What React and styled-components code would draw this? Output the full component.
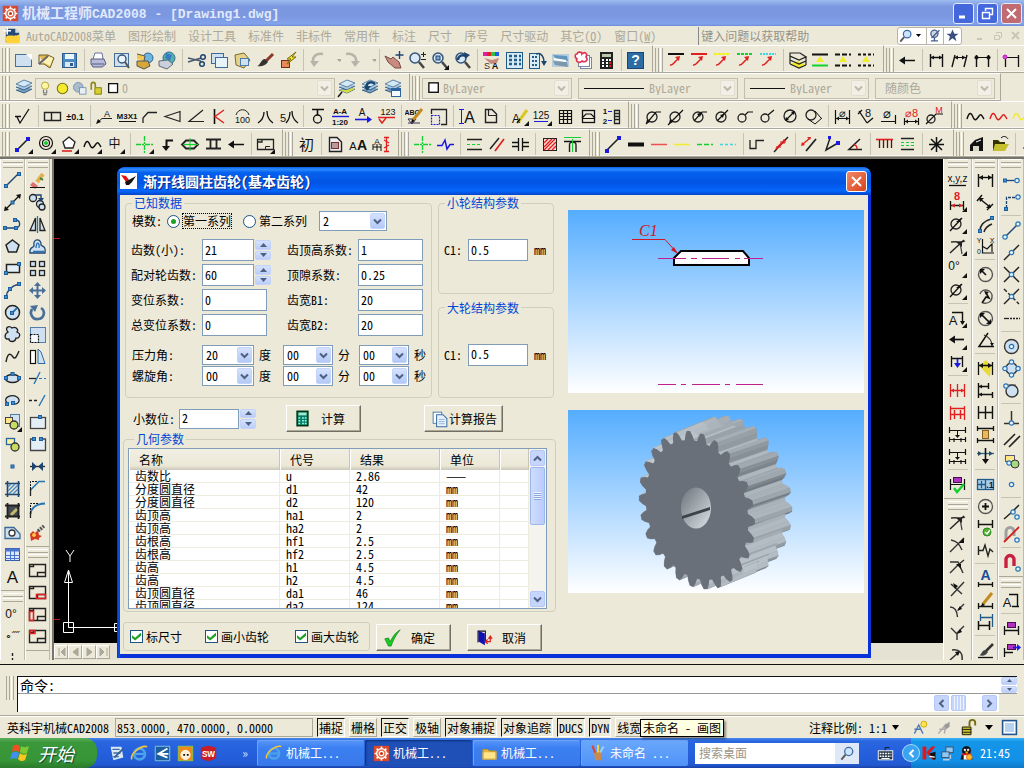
import React from 'react';
import styled, { createGlobalStyle, css } from 'styled-components';

const face = '#ece9d8';
const shade = '#aca899';
const fontStack = '"Noto Sans Mono CJK SC", "Noto Sans CJK SC", "Liberation Mono", monospace';

const GlobalStyle = createGlobalStyle`
  * { box-sizing: border-box; }
  body { margin: 0; background: ${face}; overflow: hidden; }
  body, button, input, select, table { font-family: ${fontStack}; font-size: 12px; line-height: 14px; color: #000; }
  button { cursor: default; }
`;

/* ---------- drawing primitives for the 21 x 21 icon grid ---------- */
const P = (d, s = '#111', w = 1, f = 'none', dash) => (
  <path d={d} stroke={s} strokeWidth={w} fill={f} strokeDasharray={dash} />
);
const F = (d, f = '#111') => <path d={d} fill={f} />;
const C = (x, y, r, s = '#111', f = 'none', w = 1) => (
  <circle cx={x} cy={y} r={r} stroke={s} strokeWidth={w} fill={f} />
);
const R = (x, y, w, h, s = '#111', f = 'none', sw = 1) => (
  <rect x={x} y={y} width={w} height={h} stroke={s} strokeWidth={sw} fill={f} />
);
const T = (x, y, t, c = '#111', z = 9, b = 400) => (
  <text x={x} y={y} fill={c} fontSize={z} fontWeight={b} textAnchor="middle" fontFamily='"Liberation Sans", "Noto Sans CJK SC", sans-serif'>{t}</text>
);
const N = (x, y) => R(x - 1.5, y - 1.5, 3, 3, '#1d5f9e', '#3b8fd0');
const O = (x, y) => C(x, y, 2.2, '#2775b5', '#e6f3ff', 1.2);
const corner = F('M20 15v5h-5z');
const red = '#e02020';
const blue = '#1a1ae0';
const navy = '#1e4470';
const ice = '#cfe0f1';
const green = '#12d030';
const cyan = '#3fd8e0';
const yellow = '#f0ec30';

const dimLine = (y = 10.5, c = '#111', v = '#111') => [
  P('M2.5 3V18M18.5 3V18', v), P(`M4 ${y}H17`, c),
  F(`M3 ${y}l4 -2.5v5zM18 ${y}l-4 -2.5v5z`, c),
];
const lineMark = (c, dash) => [P('M2 4H18', c, 2, 'none', dash), P('M4 15C7 16 8 12 12 9', red, 1.5), F('M14 6l-5 1l4 4z', red)];
const levels = (c, dash) => [P('M2 4.5H18', '#111', 2, 'none', dash), P('M2 15.5H18', c, 2, 'none', dash), F('M10 6l4 6h-8z', yellow)];
const viewBox = (extra) => [P('M2.5 4.5H18.5V16.5H2.5Z', '#222', 1.4), P('M2.5 6.5H6.5V4.5', '#222', 1.4), P('M10.5 16.5V12.5H18.5', '#222', 1.4), extra];
const stackPlates = [
  F('M3 12l8 3l8 -4l-8 -3z', '#7aa2c6'), P('M3 12l8 3l8 -4', '#315b80'),
  F('M3 9l8 3l8 -4l-8 -3z', '#a9c8e2'), P('M3 9l8 3l8 -4', '#315b80'),
  F('M3 6l8 3l8 -4l-8 -3z', '#d5e8f5'), P('M3 6l8 3l8 -4l-8 -3z', '#5b83a8'),
];
const diaBase = (x = 10, y = 11, r = 5) => C(x, y, r, '#222', 'none', 1.3);
const lens = [C(9, 8, 5, '#34557a', '#dbeaf6', 1.5), P('M13 12L18 18', '#444', 2.5)];
const breaker = (extra) => [P('M4 6C10 5 15 7 18 5', '#333', 1.4), P('M3 17L17 4', '#222', 1.4), P('M12 6C14 9 14 13 15 18', '#444', 1.3), F('M9 6h6v5z', '#222'), extra];
const wave = (c) => P('M2 13C4 6 6 6 8 11S12 13 14 10S17 10 19 13', c, 1.4);
const purpleTag = R(6.5, 4.5, 8, 5, '#401050', '#b030c0');
const pencil = [P('M8 14L17 3', '#c58a1e', 3), F('M6 17l1 -4l3 2z')];

const ICONS = {
  new: [R(2.5, 4.5, 16, 12, '#48718f', ice), F('M13 4h6v6z', '#fff')],
  open: [F('M3 5h9l6 3l-4 10l-6 -4z', '#e4b947'), P('M3 5h9l6 3l-4 10l-6 -4L3 14Z', '#6e5d2f'), F('M5 11l7 -5l5 2l-3 8z', '#fff3b5'), P('M3 14l9 -8', '#666', 2)],
  save: [R(3.5, 3.5, 14, 14, '#2b5c8c', '#4c8abf'), F('M6 4h9v5H6z', '#eef5fa'), F('M6 12h9v5H6z', '#dce8f1'), F('M11 13h3v3h-3z', '#2b5c8c')],
  print: [F('M7 3h7l1 6H5z', '#fff'), P('M5 9L7 3h7l1 6', '#68759a'), F('M3 9h13l2 5l-4 3H5l-2 -3z', '#b8bcd8'), P('M3 9h13l2 5l-4 3H5l-2 -3zM4 14h12', '#535d84')],
  preview: [R(3.5, 3.5, 14, 13, '#4a7193', ice), C(11, 9, 4, '#34557a', '#edf6fb', 1.4), P('M14 12l4 6', '#555', 2)],
  plot: [C(14, 8, 5, '#2e689e', '#6cb7dd'), F('M3 4l8 2l-1 5l-7 -2z', '#f0c850'), F('M3 11h11l2 5l-6 3l-7 -3z', '#d7a73a'), P('M3 11h11l2 5l-6 3l-7 -3zM3 4l8 2l-1 5', '#555')],
  publish: [C(12, 8, 6, '#3b6b96', '#4fb6a2'), F('M9 3l6 2l-2 6l-5 -3z', '#3b78c8'), F('M2 11l9 -1l5 4l-6 5l-8 -3z', '#c9d0dc'), P('M2 11l9 -1l5 4l-6 5l-8 -3z', '#5c6b80')],
  cut: [P('M2 8l13 3M2 12l13 -4', '#4b5a70', 1.5), C(17, 7, 2.3, navy, 'none', 1.5), C(16, 14, 2.3, navy, 'none', 1.5)],
  copy: [R(2.5, 3.5, 12, 10, '#3b6b9a', ice), R(6.5, 7.5, 12, 10, '#3b6b9a', '#e8f2fa')],
  paste: [F('M3 5l9 -2l6 7l-6 8l-8 -3z', '#e3d28a'), P('M3 5l9 -2l6 7l-6 8l-8 -3z', '#7a6a30'), R(8.5, 8.5, 8, 7, '#4b7ba6', ice)],
  match: [P('M11 11L18 4', '#8b3a2a', 3), F('M2 16C5 16 6 9 10 9l3 3C10 16 6 17 2 16z', '#333')],
  bolt: [R(3.5, 10.5, 8, 7, '#703018', '#e68a58'), F('M18 2l-9 7h4l-4 5l9 -7h-4z', yellow), P('M18 2l-9 7h4l-4 5l9 -7h-4z', '#7a6a00')],
  undo: [P('M16 4C8 3 4 8 7 14', '#b7b4aa', 2.5), F('M3 11l9 0l-5 6z', '#b7b4aa')],
  redo: [P('M4 4C12 3 16 8 13 14', '#b7b4aa', 2.5), F('M9 11l9 0l-5 6z', '#b7b4aa')],
  drop: [F('M8 9h5l-2.500 3z', '#aaa697')],
  pan: [F('M2 6l6 3l2 -2l6 5l2 6l-6 0l-7 -6z', '#c98a80'), P('M2 6l6 3l2 -2l6 5l2 6h-6l-7 -6z', '#794a44'), P('M16.500 1v8M12.500 5H20.500', navy, 1.4)],
  zoomRt: [lens, P('M15 4.500h5M17.500 2v5M15 9.500h5', '#222')],
  zoomWin: [lens, R(7, 6, 4, 4, navy, '#7ca9d0'), corner],
  zoomPrev: [lens, P('M6 10C6 6 10 4 14 6', navy, 2.5), F('M12 2l6 3l-5 4z', navy)],
  props: [F('M2 2h4v4H2z', '#e020a0'), F('M6 2h4v4H6z', red), F('M10 2h4v4h-4z', '#30c040'), F('M14 2h4v4h-4z', '#2060e0'), F('M3 8l8 2l7 -2l-2 5l-6 1z', '#c8897a'), T(6, 19, 'S', '#333', 9), T(14, 19, 'A', '#111', 9, 700)],
  design: [R(2.5, 2.5, 16, 16, '#1f5b88', '#d9ebf5'), P('M5 6h3M10 6h3M15 6h2M5 10h3M10 10h3M15 10h2M5 14h3M10 14h3M15 14h2', '#225e8c', 2.5)],
  tools: [R(2.5, 3.5, 10, 15, '#1f5b88', '#d9ebf5'), P('M5 7h2M8 7h2M5 11h2M8 11h2M5 15h2M8 15h2', '#225e8c', 2), P('M9 4C15 2 17 8 17 12', navy, 1.5), F('M14 11h6l-3 5z', navy)],
  sheet: [F('M2 4h17v13H2z', '#b9cedc'), F('M3 5l14 1l1 5L6 9z', '#6096bd'), F('M3 11l14 1l1 5L5 15z', '#7b98ac'), P('M4 9l12 2', '#fff', 2)],
  markup: [R(7.5, 7.5, 11, 11, '#78889c', '#fff'), R(5.5, 5.5, 11, 11, '#78889c', '#fff'), P('M4 4C5 1 9 2 9 4C12 1 15 4 13 7C16 10 12 13 9 11C6 14 2 11 4 9C1 7 2 4 4 4Z', '#e03050', 1.6, '#fff')],
  calc: [F('M4 2h13v17H4z', '#222'), F('M6 4h9v3H6z', '#bcc6aa'), P('M6 10h2M10 10h2M13 10h2M6 13h2M10 13h2M6 16h2M10 16h2', '#fff', 2), P('M13 13h2M13 16h2', red, 2)],
  help: [R(2.5, 2.5, 16, 16, '#184777', '#2b6ca5'), T(10.5, 15, '?', '#fff', 14, 700)],
  markBlack: lineMark('#111'), markRed: lineMark(red), markYellow: lineMark(yellow, '3 1'), markGreen: lineMark(green, '3 1'), markCyan: lineMark(cyan, '2 1'),
  pile: [F('M3 14l9 4l7 -3l-8 -4z', yellow), P('M3 14l9 4l7 -3M3 10l9 4l7 -3v4M3 6l9 4l7 -3v4M3 3h10l6 4l-7 3L3 6zM3 3v11', '#222', 1.2)],
  levelGreen: levels(green), levelDot: levels('#111', '5 2'), levelDash: levels('#111', '3 2'),
  arrowLeft: [P('M6 10.500H18', '#111', 1.5), F('M2 10.500l6 -4v8z')],
  dimA: [P('M4.500 4V17M16.500 4V17M5 7.500H16', '#111', 1.4), F('M5 7.500l3 -2v4zM16 7.500l-3 -2v4z')],
  dimB: [P('M3 17L6 5M15 17L18 5', '#111', 1.4), P('M6 7.500H17'), F('M5 7.500l4 -2v4zM17 7.500l-4 -2v4z')], dimC: [P('M4.500 5V17M16.500 5V17', '#111', 1.4), P('M3 7.500H18'), C(4.5, 7.5, 1.6, '#111', '#111'), C(16.5, 7.5, 1.6, '#111', '#111')],
  dimD: [P('M4.500 5V17M17.500 5V17', '#111', 1.3), P('M4 7.500H17'), C(4, 7, 2, '#c020c0', '#e040e0')],
  layers: stackPlates,
  layersA: [stackPlates, F('M3 12l8 3l8 -4l-3 -1l-5 2z', '#d8dc40'), P('M2 19l4 -5', '#111', 1.4)],
  layersB: [stackPlates, P('M8 11C6 4 12 3 16 6', navy, 2.5), F('M5 8h7l-4 5z', navy)],
  layersC: [stackPlates, R(9.5, 10.5, 9, 8, '#2b64a0', '#f4f9fd'), F('M9 10h10v3H9z', '#2b64a0')],
  surface: [P('M2 10.500h6M4 11l3 6L16 3', '#111', 1.3)],
  frame2: [P('M2.500 6.500H18.500V14.500H2.500ZM9.500 6.500V14.500', '#222', 1.4)],
  tol: [T(10, 14, '±0.1', '#111', 9, 700)],
  leadA: [P('M3 17L8 12.500H18', '#222'), F('M2 18l2 -5l3 3z'), T(13, 11, 'A', '#111', 9)],
  thread: [T(10, 13, 'M3X1', '#111', 8, 700), P('M2 15.500H19')],
  fillet: [P('M3 17V12L8 6.500H17', '#222', 1.3)], taper: [P('M2 10.500L17 5.500V15.500Z', '#222', 1.2)],
  slope: [P('M17 4L3 15.500H18', '#222', 1.2)], weldK: [P('M5.500 3V18', '#111', 1.6), P('M15 4L6 10.500L15 17', red, 1.4)],
  arc100: [P('M4 9C6 2 15 2 17 9', '#222'), T(10.5, 17, '100', '#111', 9)],
  ba: [P('M9 6C9 11 6 15 3 17M12 5C12 11 15 15 18 17', '#111', 1.3)], ba5: [T(5, 16, '5', '#111', 11), P('M12 6C12 11 10 15 8 17M14 5C14 11 17 15 20 17', '#111', 1.3)],
  datum: [P('M5 3.500H17M10.500 3V9', '#111', 1.6), C(10.5, 13, 4, '#111', 'none', 1.3)],
  section: [T(10, 8, 'A-A', '#111', 8, 700), P('M2 10.500H19', blue, 1.4), T(10, 19, '1:20', '#111', 8, 700)],
  viewArrow: [T(9, 10, 'A', '#111', 10), P('M2 13.500H16', blue, 1.6), F('M14 10l5 3.500l-5 3.500z', blue)],
  rough: [T(12, 9, '123', '#111', 9), P('M2 11.500H19M3 13l3 4l4 -5', red, 1.4)],
  sketch: [T(7, 9, 'ABC', '#111', 7, 700), P('M3 13h8l-4 5l-4 -5', '#335'), P('M3 17h12', '#335'), pencil],
  dotBox: [P('M3.500 8V3.500H18.500V18.500H13', '#222', 1.3), P('M3.500 9.500H11.500V18.500H3.500Z', blue, 1.2, 'none', '2 1')],
  textA: [P('M4.500 3V18M2 3.500h5M2 17.500h5', blue), T(12.5, 17, 'A', '#111', 16)],
  sheetTag: [P('M5.500 3.500H12L16.500 8V16.500H5.500Z', '#222', 1.4), P('M8.500 3.500V9.500H16', '#222', 1.2)],
  penA: [T(7, 17, 'A', '#111', 12), P('M10 15L18 4', '#d8c820', 3), P('M8 17l3 -4', '#111', 1.6), corner],
  num125: [T(9, 13, '125', '#111', 10), P('M2 15.500H16', blue), corner],
  grid: [P('M4.500 4.500H16.500V17.500H4.500ZM4 7.500H17M4 10.500H17M4 13.500H17M8.500 4V17M12.500 4V17', '#111', 1.2)],
  roof: [R(4.5, 4.5, 12, 12, '#111', 'none', 1.3), P('M4 12L8 8h5l4 4M4 12.500h13', '#111', 1.2)],
  order: [T(4, 8, '1', '#111', 8, 700), T(4, 18, '2', '#111', 8, 700), P('M7 5.500h4M7 14.500h4', blue), P('M13.500 4.500H18.500V17.500H13.500ZM13 7.500h6M13 10.500h6M13 13.500h6', '#222', 1.3)],
  dia1: [diaBase(), P('M4 18L14 6H19', '#111', 1.2), F('M4 18l1 -5l3 3z')], dia2: [diaBase(), P('M3 19L18 4', '#111', 1.3), F('M4 18l1 -5l3 3z')], dia3: [diaBase(), P('M6 15L14 6H19', '#111', 1.2), F('M14 6l-5 2l3 3z')], dia4: [diaBase(), P('M6 15L17 4', '#111', 1.2), F('M13 8l-4 1l3 3z')],
  dia5: [diaBase(8, 12, 4), P('M11 9L14 6H19', '#111', 1.2)], dia6: [diaBase(8, 12, 4), P('M11 9L17 4', '#111', 1.2)], dia7: [diaBase(10, 10, 6), P('M7 13L13 7', '#111', 1.3), F('M15 5l-4 1l3 3zM5 15l4 -1l-3 -3z')], dia8: [diaBase(8, 9, 5), P('M5 13l7 5M12 5l6 7M12 18l7 -6')],
  diaDim1: [P('M3.500 4V18M17.500 4V18M4 12.500H17', '#111', 1.2), F('M4 12.500l3 -2v4zM17 12.500l-3 -2v4z'), T(10.5, 11, '⌀', '#111', 11)], diaDim2: [P('M4 5l8 12M3 8l4 -4M12 17l6 -5', '#111', 1.3), T(13, 11, '8', '#111', 11)],
  diaDim3: [T(9, 12, '⌀', '#111', 13), P('M3 15.500H18M17.500 9V18', '#111', 1.2)], dia8r: [T(10.5, 11, '⌀8', red, 11), P('M3 15.500H18M3.500 12V19M17.500 12V19', '#111', 1.2), F('M4 15.500l3 -2v4zM17 15.500l-3 -2v4z')], diaM: [diaBase(7, 13, 4), P('M2 18L12 8H19', '#111', 1.2), T(15, 7, 'M', red, 9)],
  waveBlack: wave('#111'), waveRed: wave(red), waveYellow: wave(yellow),
  lineBlue: [P('M4 16L16 4', '#222', 1.6), F('M2 15h4v4H2zM14 2h4v4h-4z', blue)],
  lineBlueC: [P('M4 16L15 5', '#222', 1.6), F('M2 14h4v4H2zM13 3h4v4h-4z', blue), corner],
  target: [C(10, 9, 6.5, '#111', 'none', 1.2), C(10, 9, 3.5, '#111', 'none', 1.2), C(10, 9, 1.5, green, green), corner],
  penta: [P('M10 3L16 8L14 14H6L4 8Z', '#222', 1.3, '#fff'), P('M3 17h10', red, 1.6), corner], wavy: [wave('#111'), corner],
  mid: [T(9.5, 14, '中', '#111', 12), corner], cross: [P('M10.500 2V19M2 10.500H19', green, 1.3, 'none', '5 1 2 1'), corner], crossG: [P('M10.500 2V19M2 10.500H19', green, 1.3, 'none', '5 1 2 1')],
  stepArrow: [P('M16 6.500H9.500V13', '#111', 2), F('M5 12h8l-4 5z')], capsule: [P('M6 6.500H14L18 10.500L14 14.500H6L2 10.500Z', '#222', 1.8), P('M3 10.500H18', green, 1.2), P('M10 4v13', green)],
  hbars: [P('M3 5.500H18M3 14.500H18M7.500 5V15M13.500 5V15', '#222', 1.8)], viewRect: [P('M2.500 5.500H18.500V15.500H2.500ZM3 8h4v-2', '#222', 1.3), P('M10.500 15V12.500H15', '#222'), corner],
  chu: [T(10.5, 16, '初', '#111', 15)], pageBox: [P('M4.500 3.500H12L16.500 8V17.500H4.500Z', '#222', 1.4, '#eee'), R(6.5, 8.5, 7, 6, '#733', '#b99')],
  aa: [T(5, 16, 'A', '#111', 11), T(14, 16, 'A', '#111', 14, 700)], aaRed: [T(6, 11, 'A', '#111', 9), P('M2 16V10M6 17V10M10 17V10M2 13h8', '#111'), P('M15.500 4V17M13 3.500h5M13 17.500h5M13 6l5 3M13 14l5 -3', red, 1.3)],
  zig: [P('M2 11.500H7L10 6L12 15L15 10.500H19', blue, 1.5)], dbl: [P('M3 5.500H18M3 15.500H18', '#222', 1.4), P('M3 10.500H18', green, 1, 'none', '3 2')],
  parRed: [P('M3 15L12 4', '#222', 1.5), P('M8 17L17 5', red, 1.7)], cap: [P('M2 8.500H8M13 8.500H19M2 12.500H8M13 12.500H19M8.500 4V17M12.500 4V17', '#111', 1.3)],
  hatch: [R(4.5, 4.5, 13, 12, '#222', '#fbd8d0'), P('M5 9l4 -4M5 13l8 -8M5 16l11 -11M9 16l8 -8M13 16l4 -4', red, 1.3)],
  arch: [P('M2 3.500H19', green), P('M2 7.500H19', '#111', 1.5), P('M7.500 18V11C7 7 14 7 14 11V18', '#222', 1.4), P('M10.500 5V18', green)],
  thick: [P('M2 10.500H18', '#111', 4)], lnRed: [P('M2 10.500H18', '#f05050', 1.5)], lnYel: [P('M2 10.500H18', yellow, 1.5)], lnGrn: [P('M2 10.500H18', green, 1.5, 'none', '5 2')], lnCyn: [P('M2 10.500H18', cyan, 1.5, 'none', '3 2')],
  step: [P('M3 6V14.500H9V6.500H17', '#222', 1.3)], slashRed: [P('M4 18L18 3', '#222', 1.4), P('M6 15L15 6', red, 2), P('M6 13h5M10 8h6M14 5v5', red)],
  offset: [P('M7 17L17 5', '#222', 1.8), P('M4 10L11 4', red, 1.3), F('M2 12l1 -4l3 3zM12 3l-4 0l3 3z', red)], angBlue: [P('M8 4L4 16L16 9', '#222', 1.5), F('M6 2h3v3H6zM14 7h4v4h-4z', blue)],
  angRed: [P('M15 5L4 15.500H17', '#222', 1.6), P('M9 11C11 11 12 13 12 15', red, 1.3)], comb: [P('M2 5.500H19', red, 1.6), P('M5.500 6V14M9.500 6V14M13.500 6V14M17.500 6V14', '#511', 1.3)],
  dblG: [P('M4 4.500H17M4 15.500H17', '#222', 1.3), P('M4 8.500H17M4 11.500H17', green, 1, 'none', '3 2')], star: [P('M10.500 3V18M3 10.500H18M5 5L16 16M16 5L5 16', '#111', 1.5)],
  home: [F('M3 11l5 -5l8 -3v14H3z'), F('M6 12h6v5H6z', '#d9d7c6'), P('M9 8l5 -2', '#fff')], folder: [F('M3 6h5l2 2h5v9H3z', '#333300'), F('M5 10h14l-4 7H3z', '#c6bf30'), P('M11 4C14 1 17 3 18 5', '#111')],
  blank: [P('M4 14h8')],

  line: [P('M4 16L16 4', navy, 1.5), N(4, 16), N(17, 4)], xline: [P('M4 17L17 4', '#111', 1.3), F('M2 19l1 -5l4 4zM19 2l-1 5l-4 -4z'), N(10.5, 10.5)],
  pline: [P('M3 14H14C19 13 19 6 13 6', navy, 1.3), N(3, 14), N(14, 14), N(13, 6)], poly: [P('M10.500 4L17 9L14.500 16H6.500L4 9Z', '#222', 1.5, ice)],
  rect: [R(4.5, 6.5, 13, 8, '#222', '#e4eef6', 1.5), N(4, 15), N(17, 6)], arc: [P('M4 17C5 10 9 6 17 4', navy, 1.3), N(4, 17), N(8, 9), N(17, 4)],
  circle: [C(10.5, 10.5, 7, '#222', ice, 1.5), P('M10 11L15 6', '#2775b5', 1.8), N(10, 11)], cloud: [P('M6 8C2 4 7 1 10 4C14 2 17 6 15 8C20 10 17 15 14 14C13 19 7 18 7 15C2 16 2 10 6 8Z', '#222', 1.3, ice)],
  spline: [P('M4 16C6 5 9 8 11 11S15 10 17 5', '#222', 1.4)], ellipse: [<ellipse cx="10.5" cy="10.5" rx="7" ry="4" fill={ice} stroke="#222" strokeWidth="1.4" />, N(4, 10), N(17, 10), N(10.5, 6)],
  earc: [P('M5 13C0 7 10 4 15 7C20 11 15 15 11 14', '#222', 1.3, ice), N(11, 13), N(5, 14)], insert: [R(8.5, 2.5, 9, 12, '#4d7ca5', ice), R(3.5, 5.5, 7, 6, '#444', '#ffe883'), C(12, 13, 4, '#333', '#c8dc60', 1.3), corner],
  block: [R(4.5, 4.5, 8, 6, '#27669d', '#fff3a0', 1.3), C(13, 13, 4, '#333', '#c8dc60', 1.3)], point: [N(10.5, 10.5)],
  hatchB: [P('M3 5.500H18M3 16.500H18M5.500 3V19M16.500 3V19', navy, 1.6), P('M6 9l3 -3M6 13l7 -7M7 16l9 -9M11 16l5 -5', '#4b8ac0', 1.4)],
  gradient: [F('M5 5h12v12H5z', '#454b52'), P('M9 15l6 -6', '#c5bb6b', 3), P('M3 5.500H18M3 16.500H18M5.500 3V19M16.500 3V19', '#222', 1.8)],
  region: [P('M3 5.500H12L18 12V16.500H3Z', '#3b6b96', 1.3, ice), C(10, 11, 3, '#333', '#fff', 1.3)], table: [R(3.5, 4.5, 14, 12, '#3358a8', '#dce8fb'), P('M3 6h15', '#4b74cc', 3), P('M3 11.500H18M3 14.500H18M8.500 5V17M12.500 5V17', '#4b74cc')],
  bigA: [T(10.5, 17, 'A', '#111', 17)], zero: [T(9, 14, '0°', '#111', 12)], dots: [T(10, 14, '∘˝˝', '#111', 11)], dot1: [P('M10.500 5v3M10.500 10v6M8 16h5', '#222', 1.4)],
  erase: [P('M10 12L16 4', '#e3b050', 4), F('M6 12l5 4l-3 3l-5 -4z', '#e07070'), P('M13 8l3 2', '#3a7d3a', 2), P('M3 17.500H18')],
  copyO: [C(6, 6, 3.5, '#222', ice, 1.3), C(13, 12, 3.5, '#222', ice, 1.3), C(15, 15, 3, '#222', ice, 1.3), P('M8 3h6v3', navy, 1.4), F('M11 6h6l-3 4z', navy)],
  mirror: [P('M8.500 4V16.500H3ZM13 4V16.500H18Z', '#222', 1.3, ice), P('M10.500 2V19', '#2775b5', 1.3)], offsetC: [P('M3 17C2 11 6 12 7 10C5 2 15 2 14 9C16 11 19 10 18 17Z', navy, 1.3, ice), P('M6 15.500H17M9 12C9 5 13 6 12 12', '#2775b5', 1.3)],
  array: [R(3.5, 3.5, 5, 5, '#222', ice, 1.3), R(12.5, 3.5, 5, 5, '#222', ice, 1.3), R(3.5, 12.5, 5, 5, '#222', ice, 1.3), R(12.5, 12.5, 5, 5, '#222', ice, 1.3)],
  move: [P('M10.500 4V17M4 10.500H17', '#4a6f97', 2), F('M10.500 2l3.500 4h-7zM10.500 19l3.500 -4h-7zM2 10.500l4 -3.500v7zM19 10.500l-4 -3.500v7z', '#4a6f97')],
  rotate: [P('M5 7C2 12 6 18 11 17C17 17 19 9 14 6', '#4a6f97', 2.6), F('M3 4l8 -1l-3 7z', '#4a6f97')], scale: [R(3.5, 3.5, 15, 15, '#537fa8', ice), P('M3.500 10.500H11.500V18.500H3.500Z', '#111', 1.2, '#f6f9fc', '2 1')],
  stretch: [R(3.5, 4.5, 5, 13, '#111', '#fff', 1.2), P('M11 3V17.500H18L14 6Z', '#2d6ba4', 1, ice)], trim: [P('M2 10.500H9', '#222', 1.3), P('M12 10.500H19', '#2775b5', 1.2, 'none', '3 2'), P('M7 16L13 4', '#2775b5', 1.4)], extend: [P('M2 10.500H12', '#222', 1.3, 'none', '3 2'), P('M12 16L18 5', '#2775b5', 1.4)],
  breakP: [R(3.5, 5.5, 15, 11, '#444', '#e4eef6', 1.3), N(13, 5)], breakQ: [P('M7 5H3.500V16.500H18.500V5H15', '#444', 1.3, '#e4eef6'), N(7, 5), N(14, 5)], join: [P('M3 10.500H18', '#222', 1.3), F('M5 6l5 4.500l-5 4.500zM16 6l-5 4.500l5 4.500z', navy)],
  chamfer: [P('M3.500 12L12 3.500H18', '#2775b5', 1.6), P('M3.500 11V3.500H10', '#111', 1, 'none', '2 1'), P('M3.500 18v-7', '#222', 1.3)], filletB: [P('M3.500 14C4 9 8 4 18 3.500', '#2775b5', 2), P('M3.500 13V3.500H12', '#111', 1, 'none', '2 1'), P('M3.500 18v-5', '#222', 1.3)],
  explode: [F('M3 12l3 -3l2 2l3 -3l1 5l3 1l-3 2l0 2l-4 -1l-4 2z', '#d43a20'), P('M11 9L17 4', '#555', 3.5, 'none', '2 1'), C(7, 13, 1.6, '#f8b040', '#ffcc55')],
  view1: viewBox(null), view2: viewBox(P('M9.500 12.500H18.500V16.500H9.500Z', red, 1.6)), view3: viewBox(P('M2.500 16.500V7.500H6.500V16.500Z', red, 1.6)), view4: viewBox(P('M3 4.500h5v3H3z', red, 1.6)),

  xyz: [T(10.5, 12, 'x,y,z', '#111', 10), P('M2 15.500H19', '#111', 1.3)], dim8: [T(10, 8, '8', red, 11, 700), P('M3 13.500H17M3.500 9V18M16.500 9V18', '#111', 1.3), F('M4 13.500l4 -2v4zM16 13.500l-4 -2v4z', red), corner], diaC: [diaBase(9, 10, 5), P('M3 17L15 4', '#111', 1.3), F('M14 4l-5 4h4z'), corner],
  treeK: breaker(corner), zeroC: [T(7, 12, '0°', '#111', 12), corner], aBox: [T(6, 17, 'A', '#111', 13), P('M5 4.500H15.500V16', '#111', 1.4), F('M13 13h5l-2.500 4z'), corner], arrowC: [P('M6 9.500H17', '#111', 1.7), F('M2 9.500l6 -4v8z'), corner],
  dimBlue: [P('M4.500 4V15M15.500 4V15M5 6.500H15', '#111', 1.3), P('M10.500 7V13', blue, 1.7), F('M7 11h7l-3.500 5z', blue), corner], dimRed: [P('M3.500 4V17M17.500 4V17M10.500 4V17', red, 1.3), P('M4 10.500H17', red, 1.5), F('M4 10.500l3 -2v4zM17 10.500l-3 -2v4z', red)],
  dimRed2: [P('M3.500 4V18M17.500 4V18', red, 1.3), P('M4 6.500H17M4 12.500H17', red, 1.5), P('M7.500 8v9M13.500 8v9', red, 1.4)], dimStack: [P('M2 6.500H19M2.500 3V9M18.500 3V9M2 15.500H19M2.500 13V18M18.500 13V18M7 14v4M14 14v4', '#111', 1.2), P('M10.500 7v6'), F('M8 11h5l-2.500 3z')],
  dimCheck: [P('M3 10.500H18M3.500 5V16M17.500 5V16', '#111', 1.2), R(6.5, 3.5, 8, 5, '#401050', '#b030c0'), P('M7 14l3 4l7 -8', green, 2.4)],
  tree1: breaker(null), tree2: [P('M3 18L17 4M4 6C9 7 12 9 15 16', '#333', 1.4), F('M12 9l5 -5v5z')], tree3: [P('M3 17L11 9L17 4M3 6h8l5 11', '#333', 1.4), F('M9 8h5v5z')], tree4: [P('M4 18L17 4M4 6l11 10', '#333', 1.4), F('M6 5l5 3l-3 3z')], tree5: [P('M3 7C8 7 10 10 10.500 17M11 10L17 4', '#333', 1.4), F('M10 11l3 -5l2 3z')], tree6: [P('M4 6l6 6v6M10 11L17 4', '#333', 1.4), F('M10 12l3 -5l2 3z')], tree7: [P('M5 6C13 5 16 9 15 17M3 16L12 8', '#333', 1.5), F('M13 7l-5 1l3 4z')],
  dimLin: [P('M3.500 4V17M17.500 4V17', '#111', 1.4), P('M4 7.500H17', '#111', 1.4), F('M4 7.500l4 -2.500v5zM17 7.500l-4 -2.500v5z')], dimAl: [P('M5 7L15 15', '#111', 1.5), P('M2 9L7 3M12 18L18 12', '#111', 1.4), F('M4 6h5l-4 4zM16 16h-5l4 -4z')], dimArc: [P('M5 17C5 10 9 7 16 5', '#222', 1.5), P('M9 18C10 14 12 12 17 10', '#222', 1.5), N(5, 17), N(17, 4)],
  ordinate: [T(4, 7, 'Y', '#111', 7), T(17, 7, 'X', '#111', 7), P('M7.500 3V17H19M7 10l5 3l5 -5v8', '#111', 1.2), T(4, 18, '0', '#111', 7)],
  radius: [C(10.5, 10.5, 7, '#555', 'none', 1.4), P('M11 11L7 7', '#111', 1.7), F('M5 5h5l-5 5z')], jog: [P('M5 8C7 1 18 4 17 11C17 16 12 18 8 17', '#555', 1.4), P('M7 17l4 -6l3 1l-3 -5', '#111', 1.6), F('M9 5l5 1l-3 3z')], diam: [C(10.5, 10.5, 7, '#555', 'none', 1.4), P('M7 7l7 7', '#111', 1.7), F('M5 5h5l-5 5zM16 16h-5l5 -5z')],
  angle: [P('M13 3L4 16.500H19', '#111', 1.5), P('M9 5C14 7 17 11 17 16', '#333', 1.2), F('M15 13h4l-2 3z')], quick: [F('M11 2l-7 6l11 11l1 -11z', '#e8d838'), P('M3.500 4V17M17.500 4V17M4 7.500H17', '#111', 1.3), F('M4 7.500l4 -2.500v5zM17 7.500l-4 -2.500v5z')], base: [P('M3.500 3V18M13.500 3V9M17.500 12V18M4 6.500H13M4 14.500H17', '#111', 1.4), F('M4 6.500l3 -2v4zM4 14.500l3 -2v4z')], cont: [P('M3.500 4V17M10.500 4V17M17.500 4V17M4 10.500H17', '#111', 1.4)],
  space: [P('M2 4.500H19M2 16.500H19M2.500 2V7M18.500 2V7M2.500 14V19M18.500 14V19', '#111', 1.3), R(7.5, 6.5, 6, 8, '#8a6020', '#e8b860')], dimBreak: [P('M2 7.500H19', '#2a6a90', 1.3), P('M10.500 2V15', '#111', 1.6), F('M7 13h7l-3.500 5z'), F('M3 5l4 2.500l-4 2.500zM14 5l4 2.500l-4 2.500z', '#2a4a60')],
  tolBox: [R(2.5, 5.5, 16, 10, '#1f5b88', '#a8cce8', 1.3), P('M10.500 5V16M3 10.500h7M6.500 7v7', '#1f5b88', 1.3), T(15, 14, '.1', '#114', 9, 700)], centerM: [C(10.5, 10.5, 7, '#555', 'none', 1.3), P('M7 10.500h7M10.500 7v7', '#111', 1.8)], inspect: [P('M3.500 2V10M17.500 2V10M4 6.500H17', '#111', 1.4), C(12, 14, 4, '#2a8a20', '#50b030'), P('M10 14l2 2l3 -4', '#fff', 1.4)],
  jogL: [P('M3.500 6V15M4 10.500H8L10 5L13 16L15 9L18 12', '#222', 1.4)], dimEditA: [T(10.5, 12, 'A', '#1a4f95', 14, 700), P('M3 16.500H18M3.500 14V19M17.500 14V19', '#111', 1.3)], dimPen: [P('M3 16.500H18M3.500 13V19M17.500 13V19', '#111', 1.3), pencil], dimUpd: [P('M5.500 2V9M17.500 2V15M6 5.500H17', '#225b88', 1.3), P('M3 13.500H14M3.500 9V18M14.500 9V18', '#111', 1.5)], brushD: [P('M3 17.500H18', '#111', 1.3), P('M11 11L18 4', '#333', 2.5), F('M4 15C7 15 7 9 11 10l2 2C11 15 8 17 4 15z', '#444')],
  track: [P('M5 10.500H15', navy, 1.3), N(4, 10.5), O(16, 10.5)], from: [P('M5.500 16V5.500H14', navy, 1.3, 'none', '3 1'), N(5, 17), O(17, 5)], endp: [P('M5 16L16 5', navy, 1.4), O(4, 17), O(17, 4)], midp: [P('M3 18L18 3', '#222', 1.4), O(10.5, 10.5)], inter: [P('M3 3L18 18M18 3L3 18', '#222', 1.5), O(10.5, 10.5)], appint: [P('M3 18L18 3', '#222', 1.5), P('M3 3L18 18', '#222', 1.4, 'none', '4 2'), O(10.5, 10.5)], ext: [P('M3 10.500H8', '#222', 1.3), P('M9 10.500H19', '#222', 1.3, 'none', '2 1')],
  cen: [C(10.5, 10.5, 7, '#333', ice, 1.4), O(10.5, 10.5)], quad: [C(10.5, 10.5, 5.5, '#333', ice, 1.4), O(4, 10.5), O(17, 10.5), O(10.5, 4), O(10.5, 17)], tan: [C(11, 11, 6, '#333', ice, 1.4), P('M3 5h12', '#555'), O(5, 6)], perp: [P('M10.500 3V15M3 15.500H18', '#333', 1.5), O(10.5, 15)], para: [P('M3 15L14 4M8 17L19 6', '#222', 1.6)], insP: [R(4.5, 3.5, 9, 6, '#557', '#ffe883'), C(14, 12, 4, '#333', '#a8d880'), O(8, 11)], node: [O(10.5, 10.5)], near: [P('M3 17L11 10L18 3', '#222', 1.5), O(12, 10), O(16, 15)],
  none: [P('M5 16V8C5 2 13 2 13 8V12', '#a0a0a0', 3), P('M3 18L18 3', '#d02020', 1.8), O(16, 16)], osnap: [P('M5 16V8C5 2 13 2 13 8V14', '#c82040', 3.4), O(17, 17)], aText: [T(6, 17, 'A', '#111', 13), P('M8 4.500H16.500V17M11 16.500H18', '#111', 1.4)], dimPurple: [P('M3 12.500H18M3.500 8V17M17.500 8V17', '#111', 1.3), purpleTag], dimPurpleB: [P('M3 12.500H12M3.500 8V17', '#111', 1.3), purpleTag, P('M12 7.500h5', blue, 1.6), F('M16 4l4 3.500l-4 3.500z', blue)],

  // application, taskbar and tray pictures
  gearApp: [F('M1 1h19v19H1z', '#d8482c'), C(10.5, 10.5, 6, '#fff', '#e8704c', 1.6), C(10.5, 10.5, 2.6, '#fff', '#c03818', 1.4), P('M10.500 2v3M10.500 16v3M2 10.500h3M16 10.500h3M4.500 4.500l2 2M14.500 14.500l2 2M16.500 4.500l-2 2M4.500 16.500l2 -2', '#fff', 2)],
  dwg: [F('M4 3h10l4 4v10H4z', '#244a78'), F('M14 3l4 4h-4z', '#dfe8f4'), F('M3 12C8 8 12 12 18 9v9H5z', '#ffd23a'), P('M5.500 1v8M1.500 5H9.500', '#fff', 1.6)],
  ie: [C(10.5, 11, 6, '#4ba3ea', 'none', 3), P('M5 11h11', '#4ba3ea', 2.5), P('M2 17C0 11 12 1 19 3', '#f4c53d', 1.8)],
  desktop: [F('M4 3h12l2 12l-11 3z', '#d8e8f5'), P('M6 6h8M7 10h8M7 14h6', '#3b6da8', 1.5), P('M8 15L18 5', '#395f90', 2)],
  kway: [F('M2 2h17v17H2z', '#1b5fa0'), P('M2.500 2.500h16v16h-16z', '#8fc8f0'), P('M16 5L6 11L16 15M5 11h12', '#fff', 2)],
  face: [R(2.5, 2.5, 16, 16, '#8cc63f', '#f18a1c'), C(10.5, 12, 5, '#fff', '#fff0d8'), F('M8 11h2v2H8zM12 11h2v2h-2z')],
  sw: [F('M2 4l8 -2l9 2v12l-9 3l-8 -3z', '#c81e28'), T(10.5, 14, 'SW', '#fff', 9, 700)],
  fold: [F('M2 5h6l2 2h9v11H2z', '#e5b73b'), F('M2 9h17v9H2z', '#ffe48a'), P('M2.500 5.500h6l2 2h8v10h-16z', '#b58a1d')],
  paint: [F('M6 9h9l-1 10H7z', '#c9894c'), P('M7 10L4 2', '#e04030', 2.4), P('M10.500 10V1', '#f0d040', 2.4), P('M13 10l4 -7', '#a0d0f0', 2.4)],
  searchI: [C(12, 8, 5, '#3c6ba8', '#cfe4fb', 1.6), P('M8 12L3 18', '#5b5b5b', 2.5)],
  dish: [C(9, 8, 5, '#4a608c', '#cdd7e8', 1.8), P('M5 14L16 3M9 14v4M4 18h10', '#4a608c', 2)],
  favStar: [F('M10.500 2l2.500 6h6l-5 4l2 6.500l-5.500 -4l-5.500 4l2 -6.500l-5 -4h6z', '#3a4f80')],
  keyboard: [R(2.5, 7.5, 16, 10, '#fff', '#234'), P('M4 10.500H17M4 13.500H17', '#fff', 1.5, 'none', '2 1'), P('M6 16h9', '#fff', 1.2), P('M10 7V4h5', '#111')],
  kav: [F('M2 2h5v17H2z', '#e01818'), F('M7 10l7 -8h5l-8 9l8 8h-5z', '#e01818'), F('M11 11l8 -2v10h-3z', '#111'), P('M11 15l7 1', '#fff', 1.5)],
  net: [R(8.5, 2.5, 9, 7, '#345', '#8fc8f4'), R(3.5, 8.5, 9, 7, '#345', '#8fc8f4'), P('M5 18h8M14 12v5', '#bcd', 2)],
  qq: [C(10.5, 7, 5, '#111', '#111'), F('M5 11h11l2 7H3z'), F('M7 12h7v6H7z', '#fff'), C(8.5, 6, 1, '#fff', '#fff'), C(12.5, 6, 1, '#fff', '#fff'), P('M5 11.500H16', red, 2.2), F('M8 8h5l-2 3z', '#f2a31b'), C(14, 15, 3.5, '#d17000', '#ffb830')],
  bulbTip: [P('M4 17L9 7L14 17M4 12h8', '#4d79b5', 1.6), C(15, 6, 3.5, '#c9a000', '#ffe650')], bulbOff: [P('M4 17L12 7L11 17M5 12h8', '#aaa', 1.6), F('M11 8l6 -5v6l-4 3z', '#999')],
  padlock: [F('M3 9h10v9H3z', '#c8bd22'), P('M3.500 9.500h9v8h-9zM3 12h10M3 15h10', '#222'), P('M11 9V5C11 1 17 1 17 5V8', '#746c10', 2)],
  clean: [R(3.5, 3.5, 14, 14, '#24548c', '#b8d4f0', 1.4), R(5.5, 5.5, 10, 10, '#fff', '#b5d2f0')],
  bulb: [C(10, 7, 4.5, '#a79432', '#fff6a0'), P('M8 12v4h4v-4M8 18h4', '#777', 1.4)], sun: [C(10.5, 10.5, 6.5, '#777718', '#f4ea30', 1.3)], freeze: [C(9, 9, 6, '#6c8eae', '#a9bccb'), R(10.5, 9.500, 8, 8, '#6c8eae', '#e7eff5')], unlock: [F('M8 9h9v9H8z', '#d6cf30'), P('M8.500 9.500h8v8h-8z', '#77731a'), P('M4 12V6C4 2 9 2 9 6V9', '#8d891c', 2)], swatch: [R(4.5, 4.5, 11, 11, '#111', '#fff', 1.6)],
  calcGreen: [R(4.5, 2.5, 12, 16, '#031', '#0a7a62', 1.6), F('M6 4h9v3H6z', '#9fe8cc'), P('M6 10h2M10 10h2M13 10h2M6 13h2M10 13h2M13 13h2M6 16h2M10 16h2M13 16h2', '#8fe', 1.6)],
  pages: [R(2.5, 2.5, 10, 13, '#3a6fa8', '#fff'), P('M6.500 5.500H14L18.500 10V19.500H6.500Z', '#3a6fa8', 1.2, '#e6f1fb'), P('M9 11h7M9 13.500h7M9 16h7', '#8ab0d4')],
  okTick: [F('M2 12l4 -1l2 4C11 9 14 5 19 2C14 8 11 14 9 20H6z', '#16d020'), P('M2 12l4 -1l2 4C11 9 14 5 19 2C14 8 11 14 9 20H6z', '#0a7010', 0.7)],
  door: [P('M4.500 16V3.500H12.500V16', '#111', 1.3, '#fff'), F('M5 3l7 3v13l-7 -4z', '#1010b0'), P('M13 15h5V10M16 12l2 -3l2 3M15 12.500l-2 2.500l2 2.500', red, 1.4)],
};

const Drawn = styled.svg`display: block; flex: none;`;
const Icon = ({ name, size = 21 }) => (
  <Drawn width={size} height={size} viewBox="0 0 21 21" aria-hidden="true">
    {React.Children.toArray([ICONS[name]].flat(3))}
  </Drawn>
);

/* ---------- shell ---------- */
const Page = styled.div`
  display: flex; flex-direction: column; height: 100vh; min-height: 640px;
  background: ${face}; overflow: hidden; white-space: nowrap;
`;
const TitleBar = styled.header`
  display: flex; align-items: center; height: 26px; flex: none; padding: 0 2px; gap: 3px;
  background: linear-gradient(#9cbcf0 0, #7c98e0 25%, #7b97e0 60%, #82a4ec 92%, #6f8bd6);
`;
const TitleText = styled.h1`
  flex: 1; margin: 0; font-size: 14px; line-height: 20px; color: #e1eafc;
  span { font-family: "Liberation Mono", monospace; font-size: 13px; }
`;
const WinButton = styled.button`
  width: 21px; height: 21px; padding: 0; border: 1px solid #e4ebfb; border-radius: 3px;
  display: grid; place-items: center; background: ${p => p.$close ? '#c06a72' : '#4468dc'};
`;
const MenuBar = styled.nav`
  display: flex; align-items: center; height: 19px; flex: none; padding: 0 2px; gap: 12px; color: ${shade};
  a { color: ${shade}; text-decoration: none; }
  a u { text-underline-offset: 1px; }
`;
const MenuLead = styled.span`display: flex; align-items: center; gap: 4px;`;
const HelpBox = styled.input`
  flex: 1; min-width: 60px; height: 18px; margin-left: 30px; padding: 0 2px; border: 0; border-left: 1px solid #888;
  background: ${face}; &::placeholder { color: #96938a; opacity: 1; }
`;
const HelpTools = styled.div`
  display: flex; background: #fff; border: 1px solid #b8b5a8; border-radius: 3px; height: 18px;
  button { border: 0; border-right: 1px solid #b8b5a8; background: none; padding: 0; width: 17px; display: grid; place-items: center; }
  button:first-child { width: 29px; display: flex; align-items: center; gap: 2px; }
  button:last-child { border-right: 0; }
`;
const MdiButtons = styled.div`
  display: flex; gap: 6px; button { border: 0; background: none; padding: 0; width: 12px; height: 14px; display: grid; place-items: center; }
`;

const ToolRow = styled.div`display: flex; height: 28px; flex: none; overflow: hidden;`;
const Bar = styled.div`
  display: flex; flex: none; align-items: center;
  ${p => p.$vertical ? css`
    flex-direction: column; border-bottom: 1px solid ${shade}; padding-bottom: 3px; flex-shrink: ${p.$last ? 1 : 0};
  ` : css`
    height: 28px; padding: 2px 5px 0 0; border-top: 1px solid #fff; border-bottom: 1px solid ${shade};
    border-right: 1px solid ${shade}; box-shadow: inset 0 -1px #f8f6ee;
  `}
`;
const Grip = styled.span`
  flex: none;
  ${p => p.$vertical ? css`
    width: 20px; height: 9px; margin: 0 0 1px; border: solid; border-width: 1px 0; border-color: #fff ${shade} ${shade};
    background: linear-gradient(${face} 2px, ${shade} 2px 3px, ${face} 3px 4px, #fff 4px 5px, ${face} 5px);
  ` : css`
    width: 8px; height: 24px; margin: 0 2px; border: solid; border-width: 0 1px; border-color: #fff ${shade};
    background: linear-gradient(90deg, ${face} 2px, ${shade} 2px 3px, ${face} 3px 4px, #fff 4px 5px, ${face} 5px);
  `}
`;
const ToolButton = styled.button`
  flex: none; display: grid; place-items: center; border: 0; background: none; padding: 0;
  width: ${p => p.$narrow ? 12 : 23}px; height: 22px; overflow: hidden;
`;
const Divider = styled.span`
  flex: none; background: #c6c3b4;
  ${p => p.$vertical ? 'width: 20px; height: 1px; margin: 2px 0 3px;' : 'width: 1px; height: 22px; margin: 0 2px 0 3px;'}
`;

const Tools = ({ items, vertical, last }) => (
  <Bar $vertical={vertical} $last={last} role="toolbar">
    <Grip $vertical={vertical} />
    {items.split(' ').map((n, i) => n === '|'
      ? <Divider key={i} $vertical={vertical} />
      : <ToolButton key={i} aria-label={n} $narrow={n === 'drop'}><Icon name={n} /></ToolButton>)}
  </Bar>
);

const ROW1 = [
  'new open save | print preview plot publish | cut copy paste match bolt | undo drop redo drop | pan zoomRt zoomWin zoomPrev | props design tools sheet markup calc | help',
  'markBlack markRed markYellow markGreen markCyan | pile levelGreen levelDot levelDash',
  'arrowLeft | dimA dimB dimC | dimD dimA',
];
const ROW3 = [
  'surface | frame2 tol | leadA thread fillet taper slope weldK arc100 ba ba5 | datum section viewArrow rough | sketch dotBox | textA sheetTag | penA num125 grid roof order',
  'dia1 dia2 dia3 dia4 dia5 dia6 dia7 dia8 | diaDim1 diaDim2 diaDim3 dia8r diaM',
  'waveBlack waveRed waveYellow',
];
const ROW4 = [
  'lineBlueC target penta wavy mid | cross stepArrow capsule hbars arrowLeft | viewRect',
  'chu | pageBox aa aaRed',
  'crossG zig | dbl parRed cap | hatch arch',
  'lineBlue thick lnRed lnYel lnGrn lnCyn | step slashRed | offset angBlue angRed | comb dblG | star',
  'home folder | blank',
];
const LEFT = [
  ['line xline pline poly rect arc circle cloud spline ellipse earc insert block point hatchB gradient region table bigA', 'zero dots dot1'],
  ['erase copyO mirror offsetC array move rotate scale stretch trim extend breakP breakQ join chamfer filletB explode', 'view1 view2 view3 view4'],
];
const RIGHT = [
  ['xyz dim8 diaC treeK zeroC diaC | aBox arrowC dimBlue | dimRed dimRed2 dimStack dimStack | dimCheck', 'tree1 tree2 tree3 tree4 tree5 tree6 tree7'],
  ['dimLin dimAl dimArc ordinate | radius jog diam angle | quick base cont space dimBreak | tolBox centerM inspect jogL | dimEditA dimPen dimUpd | brushD'],
  ['track from | endp midp inter appint ext | cen quad tan | perp para insP node | near none | osnap', 'aText | dimPurple dimPurpleB'],
];

/* ---------- form controls ---------- */
const SelectWrap = styled.span`
  display: inline-grid; flex: none; width: ${p => p.$w}px; height: 20px; background: #fff; border: 1px solid #7f9db9;
  > * { grid-area: 1 / 1; }
`;
const SelectBox = styled.select`
  appearance: none; border: 0; background: none; padding: 0 18px 0 3px; margin: 0; width: 100%; height: 18px; outline: none;
`;
const Arrow = styled.span`
  justify-self: end; align-self: center; width: 15px; height: 16px; margin-right: 1px; pointer-events: none; border-radius: 2px;
  display: grid; place-items: center; background: ${p => p.$off ? '#f2f0e6' : 'linear-gradient(#d5e2fd, #b3c9f5)'};
  border: 1px solid ${p => p.$off ? '#e2dfd0' : '#c3d3fb'};
`;
const Chevron = ({ dir = 'down', color = '#4d6185' }) => {
  const turn = { down: 0, up: 180, left: 90, right: 270 }[dir];
  return <svg width="9" height="9" viewBox="0 0 9 9" aria-hidden="true"><path d="M1 2.500l3.500 3.500l3.500 -3.500" fill="none" stroke={color} strokeWidth="2" transform={`rotate(${turn} 4.5 4.5)`} /></svg>;
};
const Select = ({ value, w, label }) => (
  <SelectWrap $w={w}>
    <SelectBox aria-label={label} defaultValue={value}><option>{value}</option></SelectBox>
    <Arrow><Chevron /></Arrow>
  </SelectWrap>
);
const Field = styled.input`
  width: ${p => p.$w || 65}px; height: ${p => p.$h || 22}px; flex: none; border: 1px solid #7f9db9; background: #fff;
  padding: 0 2px 2px; margin: 0; outline: none; border-radius: 0;
`;
const Spinner = styled.span`
  display: inline-flex; align-items: center; gap: 1px;
`;
const SpinButtons = styled.span`
  display: flex; flex-direction: column; gap: 1px; width: 16px; height: ${p => p.$h || 20}px; flex: none;
  button { flex: 1; min-height: 0; padding: 0; border: 1px solid #c3d3fb; border-radius: 2px; background: linear-gradient(#d5e2fd, #bccdf6); display: grid; place-items: center; }
`;
const Spin = ({ id, value, w = 52, h = 22 }) => (
  <Spinner>
    <Field id={id} defaultValue={value} $w={w} $h={h} />
    <SpinButtons>
      <button type="button" aria-label="增加"><svg width="7" height="4"><path d="M0 4L3.500 0L7 4z" fill="#4d6185" /></svg></button>
      <button type="button" aria-label="减少"><svg width="7" height="4"><path d="M0 0L3.500 4L7 0z" fill="#4d6185" /></svg></button>
    </SpinButtons>
  </Spinner>
);

/* ---------- layer and property row ---------- */
const ComboShell = styled.div`
  display: flex; align-items: center; flex: none; width: ${p => p.$w}px; height: 21px; padding: 0 1px 0 ${p => p.$pad || 5}px;
  border: 1px solid #c1beae; color: ${shade}; margin-right: ${p => p.$gap || 0}px;
  select { appearance: none; border: 0; background: none; color: ${shade}; flex: 1; min-width: 0; padding: 0; }
`;
const Combo = ({ w, pad, gap, value, label, children }) => (
  <ComboShell $w={w} $pad={pad} $gap={gap}>
    {children}
    <select aria-label={label} defaultValue={value}><option>{value}</option></select>
    <Arrow $off><Chevron color="#bdbaa9" /></Arrow>
  </ComboShell>
);
const Stroke = styled.span`width: ${p => p.$w}px; height: 1px; background: #111; margin-right: 5px; flex: none;`;

/* ---------- workspace ---------- */
const Workspace = styled.main`
  display: flex; flex: 1; min-height: 0; border-top: 2px solid #77746a; margin-bottom: 4px;
`;
const SideColumn = styled.div`
  width: ${p => p.$w}px; flex: none; display: flex; flex-direction: column; gap: 2px; overflow: hidden;
  border-right: 1px solid #bdbaa9; border-left: 1px solid #fff;
`;
const Stage = styled.section`
  position: relative; flex: 1; min-width: 0; display: flex; flex-direction: column; margin-left: 2px; border-left: 2px solid #77746a;
`;
const Drawing = styled.div`
  flex: 1; min-height: 0; background: #000; display: flex; flex-direction: column; justify-content: space-between;
`;
const TabStrip = styled.div`
  display: flex; align-items: center; height: 17px; flex: none; background: #e5e2d3;
  button { width: 14px; height: 14px; padding: 0; border: 1px solid; border-color: #fff ${shade} ${shade} #fff; background: ${face}; display: grid; place-items: center; }
`;

/* ---------- dialog ---------- */
const Dialog = styled.div`
  position: absolute; left: 63px; top: 8px; width: 754px; background: linear-gradient(90deg, #0831d9, #0855dd 2px, #0831d9 4px); border-radius: 8px 8px 0 0; padding: 0 3px 4px;
`;
const DialogTitle = styled.div`
  display: flex; align-items: center; gap: 6px; height: 28px; padding: 0 4px 0 3px; margin: 0 -3px; border-radius: 8px 8px 0 0;
  background: linear-gradient(#0a5ce0 0, #2b8cff 8%, #0560ee 20%, #0254e4 55%, #0466fc 85%, #0344c8);
  h2 { flex: 1; margin: 0; font-size: 14px; line-height: 20px; color: #fff; text-shadow: 1px 1px #0a2a80; }
`;
const CloseButton = styled.button`
  width: 21px; height: 21px; padding: 0; border: 1px solid #fff; border-radius: 3px; background: linear-gradient(135deg, #f08868, #d8441c);
  display: grid; place-items: center;
`;
const DialogBody = styled.form`
  display: grid; grid-template-columns: 433px 296px; column-gap: 12px; padding: 1px 4px 3px 3px; background: ${face};
`;
const Group = styled.fieldset`
  border: 1px solid #d0cfbe; border-radius: 4px; margin: 0; padding: ${p => p.$pad || '0'}; min-width: 0;
  legend { color: #0046d5; padding: 0 2px; margin-left: 6px; line-height: 14px; }
`;
const TopArea = styled.div`
  display: grid; grid-template-columns: 307px 116px; column-gap: 6px; margin-left: 2px;
`;
const SmallGroups = styled.div`
  display: grid; grid-template-rows: 1fr 1fr; row-gap: 7px;
`;
const ChamferRow = styled.div`
  display: flex; align-items: center; height: 80px; padding-left: 5px; gap: 6px;
`;
const ModulusRow = styled.div`
  display: flex; align-items: center; height: 22px; padding-left: 6px;
  label { display: flex; align-items: center; gap: 3px; margin-right: 12px; }
  b { font-weight: 400; width: 35px; }
  em { font-style: normal; outline: 1px dotted #000; }
`;
const Radio = styled.input`
  appearance: none; width: 13px; height: 13px; margin: 0; border: 1px solid #1d5281; border-radius: 50%; background: #fff; display: grid; place-items: center;
  &:checked::before { content: ''; width: 5px; height: 5px; border-radius: 50%; background: #21a121; }
`;
const Check = styled.input`
  appearance: none; width: 13px; height: 13px; margin: 0; border: 1px solid #1d5281; background: #fff; display: grid; place-items: center;
  &:checked::before { content: ''; width: 9px; height: 8px; background: #21a121; clip-path: polygon(0 35%, 35% 65%, 100% 0, 100% 40%, 35% 100%, 0 70%); }
`;
const ParamGrid = styled.div`
  display: grid; grid-template-columns: 71px 85px 71px 65px; grid-auto-rows: 22px; row-gap: 3px; align-items: center; padding-left: 5px; margin-top: 7px;
`;
const AngleGrid = styled.div`
  display: grid; grid-template-columns: 70px 52px 29px 50px 26px 50px 20px; grid-auto-rows: 20px; row-gap: 1px; align-items: center; padding: 0 0 11px 6px; margin-top: 9px;
  i { font-style: normal; padding-left: 5px; }
`;
const ActionRow = styled.div`
  display: flex; align-items: center; height: 27px; margin-top: 7px; padding-left: 10px;
  label { width: 46px; flex: none; }
`;
const PushButton = styled.button`
  width: ${p => p.$w || 75}px; height: 27px; flex: none; display: flex; align-items: center; gap: ${p => p.$gap === undefined ? 9 : p.$gap}px; padding: 0 6px;
  background: ${face}; border: 1px solid; border-color: #fff #716f64 #716f64 #fff; box-shadow: inset -1px -1px ${shade};
  margin-left: ${p => p.$ml || 0}px;
`;
const ListFrame = styled.div`
  display: flex; height: 161px; border: 1px solid #7f9db9; background: #fff; overflow: hidden;
`;
const ListView = styled.div`flex: 1; overflow: hidden;`;
const DataTable = styled.table`
  width: 100%; table-layout: fixed; border-collapse: separate; border-spacing: 0; line-height: 12px;
  th { height: 21px; font-weight: 400; text-align: left; padding: 0 0 0 10px; background: linear-gradient(#f1efe3, #ebe8d7 80%, #cbc7b8); border-right: 1px solid #c9c5b2; box-shadow: inset 1px 0 #fff; }
  td { height: 13px; padding: 0 0 0 6px; border-bottom: 1px solid #eeecdf; border-right: 1px solid #eeecdf; }
`;
const ScrollBar = styled.div`
  width: 17px; flex: none; display: flex; flex-direction: column; padding: 1px; gap: 1px; background: #f4f3ee;
  button { width: 15px; height: 16px; flex: none; padding: 0; border: 1px solid #b6c8f7; border-radius: 2px; background: #c5d5fb; display: grid; place-items: center; }
`;
const Thumb = styled.span`
  height: 58px; border: 1px solid #9db6ee; border-radius: 2px; background: linear-gradient(90deg, #cfdcfd, #b9ccfa); margin-bottom: auto;
  display: grid; place-items: center;
  &::before { content: ''; width: 7px; height: 8px; background: repeating-linear-gradient(#eef3fe 0 1px, #8ca6e0 1px 2px); }
`;
const Footer = styled.div`
  display: flex; align-items: flex-end; margin-top: 10px;
`;
const CheckBox = styled.div`
  display: flex; align-items: center; gap: 23px; width: 247px; height: 29px; padding-left: 6px; border: 1px solid #d0cfbe; border-radius: 3px;
  label { display: flex; align-items: center; gap: 3px; }
  label:last-child { margin-left: 3px; }
`;
const Pictures = styled.div`
  display: flex; flex-direction: column; gap: 17px; padding-top: 14px;
  svg { display: block; width: 100%; height: auto; }
`;

const RESULTS = [
  ['齿数比', 'u', '2.86', '——'], ['分度圆直径', 'd1', '42', 'mm'], ['分度圆直径', 'd2', '120', 'mm'],
  ['齿顶高', 'ha1', '2', 'mm'], ['齿顶高', 'ha2', '2', 'mm'], ['齿根高', 'hf1', '2.5', 'mm'],
  ['齿根高', 'hf2', '2.5', 'mm'], ['齿高', 'h1', '4.5', 'mm'], ['齿高', 'h2', '4.5', 'mm'],
  ['齿顶圆直径', 'da1', '46', 'mm'], ['齿顶圆直径', 'da2', '124', 'mm'],
];

const Sky = ({ id }) => (
  <>
    <defs><linearGradient id={id} x1="0" y1="0" x2="0" y2="1"><stop offset="0" stopColor="#55adff" /><stop offset="1" stopColor="#fff" /></linearGradient></defs>
    <rect width="296" height="183" fill={`url(#${id})`} />
  </>
);
const ChamferPicture = () => (
  <svg viewBox="0 0 296 183" role="img" aria-label="倒角">
    <Sky id="skyA" />
    <text x="71" y="26" fill="#d01828" fontFamily='"Liberation Serif", serif' fontStyle="italic" fontSize="16">C1</text>
    <path d="M64 29.500H97L110 44" fill="none" stroke="#d01828" />
    <path d="M110 44l-7 -4l3 -3z" fill="#d01828" />
    <path d="M106 55V48L113 41H175L181 48V55Z" fill="#fff" stroke="#000" strokeWidth="2" />
    <path d="M90 48.500H118M123 48.500H129M134 48.500H161M167 48.500H172M176 48.500H195M90 174.500H108M113 174.500H118M124 174.500H152M157 174.500H162M168 174.500H195" stroke="#c0208c" />
  </svg>
);

/* A helical spur gear: the front outline is swept to the back outline facet by facet. */
const TEETH = 26;
const gearPoint = (angle, r, back) => {
  const a = angle + (back ? 0.03 : 0);
  const y = Math.sin(a) * 79 * r;
  const x = Math.cos(a) * 57 * r + y * 0.13;
  return [129 + x + (back ? 37 : 0), 100 + y + (back ? -15 : 0)];
};
const outline = [];
for (let i = 0; i < TEETH; i += 1) {
  [[0, 0.885], [0.24, 0.885], [0.36, 0.95], [0.5, 1], [0.74, 1], [0.88, 0.95]].forEach(([f, r]) => {
    outline.push([((i + f) / TEETH) * Math.PI * 2, r]);
  });
}
const front = outline.map(([a, r]) => gearPoint(a, r, false));
const rear = outline.map(([a, r]) => gearPoint(a, r, true));
const facets = front.map((p, i) => {
  const j = (i + 1) % front.length;
  const q = front[j];
  const nx = q[1] - p[1];
  const ny = p[0] - q[0];
  const len = Math.hypot(nx, ny) || 1;
  const up = -ny / len;
  const mid = (outline[i][0] + outline[j][0]) / 2;
  const isRoot = i % 6 === 0;
  const base = 158 - 26 * Math.cos(mid + 0.75) + (isRoot ? 14 : 0);
  const lit = Math.round(Math.max(66, Math.min(212, base + up * (up < 0 ? 48 : 36) + (nx / len) * 22)));
  return { pts: [p, q, rear[j], rear[i]], toward: nx * 37 - ny * 15, order: Math.cos(mid - 1.9), tone: `rgb(${lit - 9},${lit},${lit + 7})` };
}).sort((a, b) => (Math.sign(a.toward) - Math.sign(b.toward)) || (b.order - a.order) * -1);
const toPoints = (list) => list.map(([x, y]) => `${x.toFixed(1)},${y.toFixed(1)}`).join(' ');
const GearPicture = () => (
  <svg viewBox="0 0 296 183" role="img" aria-label="齿轮">
    <Sky id="skyB" />
    <defs><linearGradient id="bore" x1="0" y1="0" x2="1" y2="1"><stop offset="0" stopColor="#6b737a" /><stop offset="1" stopColor="#dbe3e9" /></linearGradient></defs>
    <polygon points={toPoints(rear)} fill="#87919a" />
    {facets.map((f, i) => <polygon key={i} points={toPoints(f.pts)} fill={f.tone} stroke={f.tone} strokeWidth="0.4" />)}
    <polygon points={toPoints(front)} fill="#69707a" />
    <ellipse cx="128" cy="98" rx="15" ry="20.5" fill="url(#bore)" />
    <path d="M114 106l28 -9v3l-28 9z" fill="#3d444b" />
  </svg>
);

const GearDialog = () => (
  <Dialog role="dialog" aria-labelledby="gear-title">
    <DialogTitle>
      <svg width="17" height="16" viewBox="0 0 17 16" aria-hidden="true"><path d="M0 0h17v16H0z" fill="#fff" /><path d="M1 2l5 1l3 4l-3 2z" fill="#e01010" /><path d="M5 9l11 -6l-4 6l-3 3H6z" fill="#111" /></svg>
      <h2 id="gear-title">渐开线圆柱齿轮(基本齿轮)</h2>
      <CloseButton aria-label="关闭"><svg width="13" height="13"><path d="M2 2l9 9M11 2l-9 9" stroke="#fff" strokeWidth="2" /></svg></CloseButton>
    </DialogTitle>
    <DialogBody onSubmit={e => e.preventDefault()}>
      <div>
        <TopArea>
          <Group>
            <legend>已知数据</legend>
            <ModulusRow>
              <b>模数:</b>
              <label><Radio type="radio" name="series" defaultChecked /><em>第一系列</em></label>
              <label><Radio type="radio" name="series" />第二系列</label>
              <Select value="2" w={68} label="模数" />
            </ModulusRow>
            <ParamGrid>
              <label htmlFor="z1">齿数(小):</label><Spin id="z1" value="21" />
              <label htmlFor="ha">齿顶高系数:</label><Field id="ha" defaultValue="1" />
              <label htmlFor="z2">配对轮齿数:</label><Spin id="z2" value="60" />
              <label htmlFor="c">顶隙系数:</label><Field id="c" defaultValue="0.25" />
              <label htmlFor="x">变位系数:</label><Field id="x" defaultValue="0" />
              <label htmlFor="b1">齿宽B1:</label><Field id="b1" defaultValue="20" />
              <label htmlFor="xs">总变位系数:</label><Field id="xs" defaultValue="0" />
              <label htmlFor="b2">齿宽B2:</label><Field id="b2" defaultValue="20" />
            </ParamGrid>
            <AngleGrid>
              {[['压力角', '20'], ['螺旋角', '00']].map(([name, deg]) => (
                <React.Fragment key={name}>
                  <span>{name}:</span>
                  <Select value={deg} w={52} label={`${name}度`} /><i>度</i>
                  <Select value="00" w={50} label={`${name}分`} /><i>分</i>
                  <Select value="00" w={50} label={`${name}秒`} /><i>秒</i>
                </React.Fragment>
              ))}
            </AngleGrid>
          </Group>
          <SmallGroups>
            {['小轮', '大轮'].map(name => (
              <Group key={name}>
                <legend>{name}结构参数</legend>
                <ChamferRow>
                  <label htmlFor={`c-${name}`}>C1:</label>
                  <Field id={`c-${name}`} defaultValue="0.5" $w={60} />
                  <span>mm</span>
                </ChamferRow>
              </Group>
            ))}
          </SmallGroups>
        </TopArea>
        <ActionRow>
          <label htmlFor="digits">小数位:</label>
          <Spin id="digits" value="2" w={60} h={20} />
          <PushButton type="button" $ml={30}><Icon name="calcGreen" size={19} />计算</PushButton>
          <PushButton type="button" $w={79} $gap={0} $ml={63}><Icon name="pages" size={18} />计算报告</PushButton>
        </ActionRow>
        <Group $pad="2px 8px 2px 4px">
          <legend>几何参数</legend>
          <ListFrame>
            <ListView>
              <DataTable>
                <colgroup><col width="151" /><col width="70" /><col width="90" /><col width="60" /><col /></colgroup>
                <thead><tr><th>名称</th><th>代号</th><th>结果</th><th>单位</th><th aria-label="空" /></tr></thead>
                <tbody>
                  {RESULTS.map(row => <tr key={row[1]}>{row.map((cell, i) => <td key={i}>{cell}</td>)}<td /></tr>)}
                </tbody>
              </DataTable>
            </ListView>
            <ScrollBar>
              <button type="button" aria-label="上"><Chevron dir="up" /></button>
              <Thumb />
              <button type="button" aria-label="下"><Chevron /></button>
            </ScrollBar>
          </ListFrame>
        </Group>
        <Footer>
          <CheckBox>
            {['标尺寸', '画小齿轮', '画大齿轮'].map(t => <label key={t}><Check type="checkbox" defaultChecked />{t}</label>)}
          </CheckBox>
          <PushButton type="submit" $ml={6}><Icon name="okTick" size={19} />确定</PushButton>
          <PushButton type="button" $ml={16}><Icon name="door" size={19} />取消</PushButton>
        </Footer>
      </div>
      <Pictures><ChamferPicture /><GearPicture /></Pictures>
    </DialogBody>
  </Dialog>
);

/* ---------- command line, status bar, taskbar ---------- */
const CommandDock = styled.div`
  display: flex; flex: none; height: 52px; padding: 11px 7px 4px 4px; border-top: 1px solid #111;
`;
const CommandBox = styled.div`
  flex: 1; border-left: 1px solid #111; border-top: 1px solid #111; margin-left: 1px; display: flex; flex-direction: column;
`;
const HistoryLine = styled.div`
  display: flex; justify-content: space-between; height: 17px; background: #fff; padding: 0 0 0 2px; border-bottom: 1px solid #999;
  font-size: 14px; line-height: 16px;
`;
const PromptLine = styled.div`
  display: flex; flex: 1; background: #fff; margin-right: 18px;
  input { flex: 1; border: 0; outline: none; background: none; min-width: 0; }
  button, span { width: 15px; height: 16px; align-self: center; padding: 0; border: 1px solid #b6c8f7; border-radius: 2px; background: #c5d5fb; display: grid; place-items: center; margin-right: 2px; }
  span { margin-right: 16px; background: repeating-linear-gradient(90deg, #c5d5fb 0 2px, #eef3fe 2px 3px); }
`;
const StatusBar = styled.footer`
  position: relative; display: flex; align-items: center; flex: none; height: 22px; padding: 0 4px 0 7px; border-top: 1px solid #fff; box-shadow: 0 -1px ${shade}; gap: 4px;
`;
const Coords = styled.output`
  width: 198px; height: 19px; margin-left: 2px; padding: 0 1px; border: 1px solid ${shade}; line-height: 18px;
`;
const Toggle = styled.button`
  height: 19px; padding: 0 1px; background: ${face}; border: 1px solid; line-height: 17px; flex: none;
  border-color: ${p => p.$on ? '#111 #fff #fff #111' : '#fff #aca899 #aca899 #fff'};
`;
const ScaleLabel = styled.span`display: flex; align-items: center; gap: 6px; margin-left: auto; margin-right: 8px;`;
const ScaleValue = styled.button`
  display: flex; align-items: center; gap: 5px; border: 0; background: none; padding: 0;
`;
const StatusTools = styled.span`display: flex; align-items: center; gap: 6px;`;
const Tip = styled.div`
  position: absolute; left: 640px; top: 2px; height: 18px; padding: 0 2px; background: #ffffe1; border: 1px solid #000; line-height: 15px;
  box-shadow: 2px 2px 2px #0006; z-index: 2;
`;
const TaskBar = styled.footer`
  display: flex; align-items: center; flex: none; height: 30px; color: #fff;
  background: linear-gradient(#4a88ee 0, #2a66e0 10%, #245edb 60%, #2259d0 90%, #1941a5);
`;
const Start = styled.button`
  width: 97px; height: 30px; flex: none; border: 0; border-radius: 0 12px 12px 0; color: #fff; display: flex; align-items: center; gap: 8px; padding: 0 10px;
  background: linear-gradient(#5cb05c 0, #3a983a 15%, #379537 75%, #2a7a2a); font-size: 18px; line-height: 24px; font-style: italic; text-shadow: 1px 1px 1px #143;
`;
const Quick = styled.div`
  display: flex; gap: 3px; padding-left: 9px; width: 160px; flex: none; align-items: center;
  button { border: 0; background: none; padding: 0; width: 20px; display: grid; place-items: center; color: #cfe0ff; }
  button:last-child { margin-left: 14px; }
`;
const Task = styled.button`
  width: 107px; height: 26px; flex: 0 1 auto; margin-right: 1px; padding: 0 8px; border: 0; border-radius: 2px; display: flex; align-items: center; gap: 3px; color: #fff;
  background: ${p => p.$down ? '#1e50b8' : p.$hot ? 'linear-gradient(#6aa8fc, #4f92f8)' : 'linear-gradient(#5a96f8, #3c80f2 30%, #3878ea)'};
  box-shadow: ${p => p.$down ? 'inset 1px 1px 2px #0c2f78' : 'inset 1px 1px #6ca4fa'};
`;
const DeskSearch = styled.div`
  display: flex; margin-left: 6px; width: 164px; height: 21px; background: #fff; flex: none;
  input { flex: 1; min-width: 0; border: 0; padding: 0 4px; outline: none; &::placeholder { color: #9a978a; opacity: 1; } }
  button { width: 24px; border: 0; background: #dfe8f6; padding: 0; display: grid; place-items: center; }
`;
const InputIcon = styled.span`margin: 0 auto;`;
const Tray = styled.div`
  display: flex; align-items: center; gap: 2px; width: 113px; height: 30px; flex: none; color: #fff;
  background: linear-gradient(#38b4f6 0, #1496e8 12%, #1290e8 75%, #0f78c8);
  button { border: 0; border-radius: 50%; width: 16px; height: 16px; padding: 0; margin-left: -8px; background: #3aa4f0; display: grid; place-items: center; box-shadow: 0 0 0 1px #b0dcfa; }
  time { margin-left: 3px; }
`;

export default function App() {
  return (
    <Page>
      <GlobalStyle />
      <TitleBar>
        <Icon name="gearApp" size={17} />
        <TitleText>机械工程师<span>CAD2008 - [Drawing1.dwg]</span></TitleText>
        <WinButton aria-label="最小化"><svg width="13" height="13"><path d="M2 10h6" stroke="#fff" strokeWidth="3" /></svg></WinButton>
        <WinButton aria-label="还原"><svg width="13" height="13"><path d="M4.500 4V1.500H11.500V7.500H9M1.500 5.500H8.500V11.500H1.500Z" stroke="#fff" strokeWidth="1.4" fill="none" /></svg></WinButton>
        <WinButton $close aria-label="关闭"><svg width="13" height="13"><path d="M2 2l9 9M11 2l-9 9" stroke="#fff" strokeWidth="2" /></svg></WinButton>
      </TitleBar>
      <MenuBar>
        <MenuLead><Icon name="dwg" size={20} /><a href="#m0">AutoCAD2008菜单</a></MenuLead>
        {['图形绘制', '设计工具', '标准件', '非标件', '常用件', '标注', '尺寸', '序号', '尺寸驱动'].map(m => <a href={`#${m}`} key={m}>{m}</a>)}
        <a href="#other">其它(<u>O</u>)</a>
        <a href="#window">窗口(<u>W</u>)</a>
        <HelpBox placeholder="键入问题以获取帮助" aria-label="帮助" />
        <HelpTools>
          <button aria-label="搜索"><Icon name="searchI" size={16} /><svg width="5" height="3"><path d="M0 0h5l-2.500 3z" /></svg></button>
          <button aria-label="通讯"><Icon name="dish" size={15} /></button>
          <button aria-label="收藏"><Icon name="favStar" size={15} /></button>
        </HelpTools>
        <MdiButtons>
          <button aria-label="最小化图形"><svg width="10" height="10"><path d="M2 8h5" stroke="#c9c6b8" strokeWidth="2" /></svg></button>
          <button aria-label="还原图形"><svg width="10" height="10"><path d="M3.500 3V1.500H8.500V6.500H7M1.500 4.500H6.500V8.500H1.500Z" stroke="#c9c6b8" fill="none" /></svg></button>
          <button aria-label="关闭图形"><svg width="10" height="10"><path d="M1 1l7 7M8 1l-7 7" stroke="#c9c6b8" strokeWidth="2" /></svg></button>
        </MdiButtons>
      </MenuBar>
      <ToolRow>{ROW1.map(t => <Tools key={t} items={t} />)}</ToolRow>
      <ToolRow>
        <Bar role="toolbar">
          <Grip />
          <ToolButton aria-label="图层特性"><Icon name="layers" /></ToolButton>
          <Combo w={300} pad={1} value="0" label="图层">
            {['bulb', 'sun', 'freeze', 'unlock'].map(n => <Icon key={n} name={n} size={17} />)}
            <Icon name="swatch" size={17} />
          </Combo>
          {['layersA', 'layersB', 'layersC'].map(n => <ToolButton key={n} aria-label={n}><Icon name={n} /></ToolButton>)}
        </Bar>
        <Bar role="toolbar">
          <Grip />
          <Combo w={150} pad={2} gap={6} value="ByLayer" label="颜色"><Icon name="swatch" size={18} /></Combo>
          <Combo w={160} gap={6} value="ByLayer" label="线型"><Stroke $w={60} /></Combo>
          <Combo w={125} gap={6} value="ByLayer" label="线宽"><Stroke $w={35} /></Combo>
          <Combo w={120} pad={9} value="随颜色" label="打印样式" />
        </Bar>
      </ToolRow>
      <ToolRow>{ROW3.map(t => <Tools key={t} items={t} />)}</ToolRow>
      <ToolRow>{ROW4.map(t => <Tools key={t} items={t} />)}</ToolRow>
      <Workspace>
        {LEFT.map((col, i) => (
          <SideColumn $w={25} key={i}>{col.map((t, k) => <Tools key={t} items={t} vertical last={k > 0} />)}</SideColumn>
        ))}
        <Stage>
          <Drawing>
            <svg width="12" height="160" aria-hidden="true"><path d="M0 79.500H6" stroke="#c01818" /></svg>
            <svg width="70" height="100" viewBox="0 0 70 100" aria-hidden="true">
              <g stroke="#fff" fill="none">
                <path d="M14.500 80V28M14.500 84.500H70M9.500 79.500H19.500V89.500H9.500ZM14.500 80V84.500H20M14.500 27L10.500 39.500H18.500Z" />
                <path d="M12 7L16 13L20 7M16 13V19" />
                <path d="M60.500 80.500h5v8h-5z" />
              </g>
              <path d="M0 76.500H6" stroke="#c01818" />
            </svg>
          </Drawing>
          <TabStrip>
            {['M3 1v8M9 1L5 5l4 4z', 'M8 1L3 5l5 4z', 'M3 1l5 4l-5 4z', 'M9 1v8M2 1l4 4l-4 4z'].map((d, i) => (
              <button key={d} aria-label={`布局${i + 1}`}><svg width="11" height="10"><path d={d} fill={shade} stroke={shade} /></svg></button>
            ))}
          </TabStrip>
          <GearDialog />
        </Stage>
        {RIGHT.map((col, i) => (
          <SideColumn $w={i === 0 ? 29 : 26} key={i}>{col.map((t, k) => <Tools key={t} items={t} vertical last={k > 0} />)}</SideColumn>
        ))}
      </Workspace>
      <CommandDock>
        <Grip />
        <CommandBox>
          <HistoryLine>命令: <SpinButtons $h={16}><button aria-label="上翻"><svg width="5" height="3"><path d="M0 3L2.500 0L5 3z" fill="#4d6185" /></svg></button><button aria-label="下翻"><svg width="5" height="3"><path d="M0 0L2.500 3L5 0z" fill="#4d6185" /></svg></button></SpinButtons></HistoryLine>
          <PromptLine>
            <input aria-label="命令" />
            <button aria-label="左移"><Chevron dir="left" /></button><span /><button aria-label="右移"><Chevron dir="right" /></button>
          </PromptLine>
        </CommandBox>
      </CommandDock>
      <StatusBar>
        <span>英科宇机械CAD2008</span>
        <Coords>853.0000, 470.0000, 0.0000</Coords>
        {[['捕捉', 1], ['栅格', 0], ['正交', 1], ['极轴', 0], ['对象捕捉', 1], ['对象追踪', 1], ['DUCS', 1], ['DYN', 1], ['线宽', 0]].map(([t, on]) => (
          <Toggle key={t} $on={on}>{t}</Toggle>
        ))}
        <ScaleLabel>注释比例:<ScaleValue>1:1<svg width="7" height="5"><path d="M0 0h7l-3.500 5z" /></svg></ScaleValue></ScaleLabel>
        <StatusTools>
          <Icon name="bulbTip" size={18} /><Icon name="bulbOff" size={18} /><Icon name="padlock" size={20} />
          <svg width="8" height="5"><path d="M0 0h8l-4 5z" /></svg><Icon name="clean" size={21} />
        </StatusTools>
        <Tip role="tooltip">未命名 - 画图</Tip>
      </StatusBar>
      <TaskBar>
        <Start>
          <svg width="20" height="18" viewBox="0 0 20 18" aria-hidden="true"><path d="M3 2C6 0 8 1 10 2L9 8C7 7 5 6 2 8z" fill="#f05020" /><path d="M11 2C14 4 16 3 19 2L17 9C15 10 12 10 10 8z" fill="#80c830" /><path d="M2 9C5 7 7 8 9 9L7 15C5 14 3 14 0 15z" fill="#4090f0" /><path d="M10 9C12 11 14 11 17 10L15 16C12 18 10 17 8 15z" fill="#f8c820" /></svg>
          开始
        </Start>
        <Quick>
          {['desktop', 'ie', 'kway', 'face', 'sw'].map(n => <button key={n} aria-label={n}><Icon name={n} size={19} /></button>)}
          <button>»</button>
        </Quick>
        <Task><Icon name="ie" size={18} />机械工...</Task>
        <Task $down><Icon name="gearApp" size={17} />机械工...</Task>
        <Task><Icon name="fold" size={17} />机械工...</Task>
        <Task $hot><Icon name="paint" size={18} />未命名 ...</Task>
        <DeskSearch><input placeholder="搜索桌面" aria-label="搜索桌面" /><button aria-label="搜索"><Icon name="searchI" size={17} /></button></DeskSearch>
        <InputIcon><Icon name="keyboard" size={19} /></InputIcon>
        <Tray>
          <button aria-label="显示"><Chevron dir="left" color="#fff" /></button>
          <Icon name="kav" size={16} /><Icon name="net" size={17} /><Icon name="qq" size={17} />
          <time>21:45</time>
        </Tray>
      </TaskBar>
    </Page>
  );
}
